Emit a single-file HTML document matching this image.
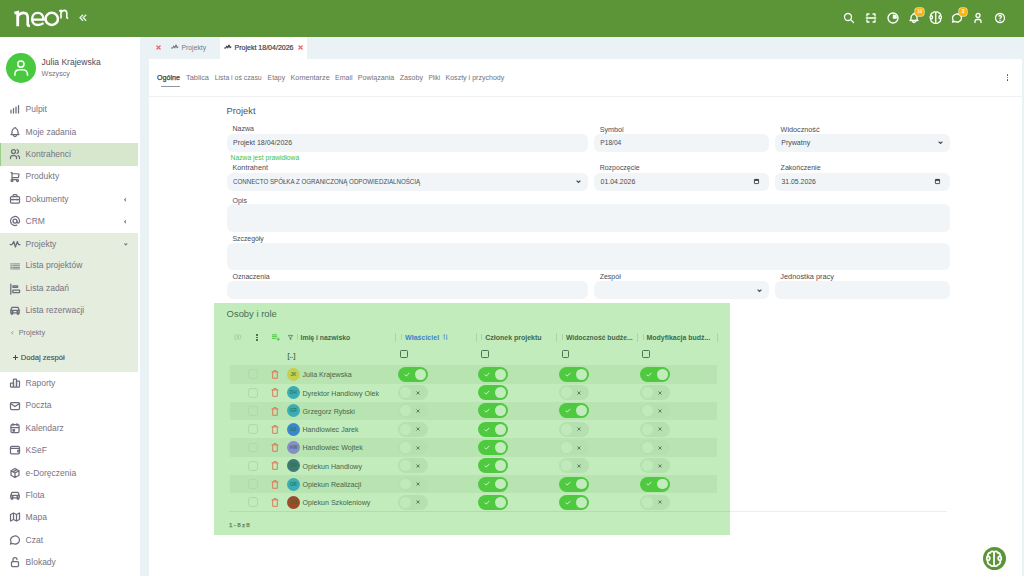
<!DOCTYPE html><html><head><meta charset="utf-8"><style>
*{margin:0;padding:0;box-sizing:border-box}
html,body{width:1024px;height:576px;overflow:hidden;background:#ebf2f6;font-family:"Liberation Sans",sans-serif}
.t{position:absolute;white-space:nowrap}
.r{position:absolute}
svg{position:absolute;overflow:visible}
</style></head><body>
<div class="r" style="left:0.0px;top:0.0px;width:1024.0px;height:37.0px;background:#5b9538;"></div>
<svg style="left:0;top:0" width="80" height="37" viewBox="0 0 80 37"><g fill="none" stroke="#fff" stroke-linecap="butt"><path d="M14.4 13.2 L17.7 12.3 V26.2" stroke-width="2.8"/><path d="M17.7 16.8 C19 14 21.2 12.9 23.6 12.9 C26.5 12.9 27.7 14.8 27.7 17.6 V24.9 Q27.9 25.9 29.9 25.9" stroke-width="2.6"/><path d="M32.1 19.6 H43.5 C43.5 15.4 41 12.9 37.7 12.9 C34.3 12.9 32.1 15.7 32.1 19.2 C32.1 22.8 34.5 25 37.9 25 C40.2 25 41.9 24.3 43.5 23.1" stroke-width="2.4"/><ellipse cx="51.75" cy="18.9" rx="6.2" ry="6.05" stroke-width="2.5"/><path d="M59.2 10.9 L61 10.5 V18.6 M61 12.9 C61.8 11.1 62.9 10.4 64.2 10.4 C65.9 10.4 66.8 11.5 66.8 13.3 V17.6 Q67 18.4 68.2 18.4" stroke-width="1.6"/></g></svg>
<svg style="left:79px;top:14px" width="8" height="8" viewBox="0 0 8 8"><path d="M4 0.8 L1 3.8 L4 6.8 M7.2 0.8 L4.2 3.8 L7.2 6.8" fill="none" stroke="#e8f3f0" stroke-width="1.3"/></svg>
<svg style="left:843.0px;top:11.6px" width="12" height="12" viewBox="0 0 24 24"><g fill="none" stroke="#fff" stroke-width="2.60" stroke-linecap="round" stroke-linejoin="round"><circle cx="10" cy="10" r="7"/><path d="M21 21l-6-6"/></g></svg>
<svg style="left:865.3px;top:11.6px" width="12" height="12" viewBox="0 0 24 24"><g fill="none" stroke="#fff" stroke-width="2.70" stroke-linecap="round" stroke-linejoin="round"><path d="M4 8V4h4M4 16v4h4M16 4h4v4M16 20h4v-4M2.5 12h19"/></g></svg>
<svg style="left:886.5px;top:11.6px" width="12" height="12" viewBox="0 0 24 24"><g fill="none" stroke="#fff" stroke-width="2.70" stroke-linecap="round" stroke-linejoin="round"><circle cx="12" cy="12" r="10"/><path d="M13 6.5v5.5h5.5A5.5 5.5 0 0 0 13 6.5Z" fill="#fff"/></g></svg>
<svg style="left:907.8px;top:11.9px" width="12" height="12" viewBox="0 0 24 24"><g fill="none" stroke="#fff" stroke-width="2.60" stroke-linecap="round" stroke-linejoin="round"><path d="M10 5a2 2 0 0 1 4 0a7 7 0 0 1 4 6v3a4 4 0 0 0 2 3H4a4 4 0 0 0 2-3v-3a7 7 0 0 1 4-6"/><path d="M9 17v1a3 3 0 0 0 6 0v-1"/></g></svg>
<svg style="left:927.8px;top:10.1px" width="15.5" height="15.5" viewBox="0 0 24 24"><g fill="none" stroke="#fff" stroke-width="2.01" stroke-linecap="round" stroke-linejoin="round"><path d="M12 3.5C10.5 2.5 8.3 2.8 7.5 4.5C5.6 4.3 4.1 6.3 4.5 8.5C2.8 9.8 2.8 12.8 4.5 14C3.9 16.3 5.2 18.6 7.5 19C8.5 20.8 10.8 21 12 20C13.2 21 15.5 20.8 16.5 19C18.8 18.6 20.1 16.3 19.5 14C21.2 12.8 21.2 9.8 19.5 8.5C19.9 6.3 18.4 4.3 16.5 4.5C15.7 2.8 13.5 2.5 12 3.5Z"/><path d="M12 3.5V20M4.5 8.5C6 8.8 7 10 7 11.2M4.5 14C6 13.7 7 12.6 7 11.5M19.5 8.5C18 8.8 17 10 17 11.2M19.5 14C18 13.7 17 12.6 17 11.5"/></g></svg>
<svg style="left:950.5px;top:11.6px" width="12" height="12" viewBox="0 0 24 24"><g fill="none" stroke="#fff" stroke-width="2.60" stroke-linecap="round" stroke-linejoin="round"><path d="M3 20l1.3-3.9A9 8 0 1 1 7.7 19L3 20"/></g></svg>
<svg style="left:972.3px;top:11.6px" width="12" height="12" viewBox="0 0 24 24"><g fill="none" stroke="#fff" stroke-width="2.60" stroke-linecap="round" stroke-linejoin="round"><circle cx="12" cy="7" r="4"/><path d="M6 21v-2a4 4 0 0 1 4-4h4a4 4 0 0 1 4 4v2"/></g></svg>
<svg style="left:993.5px;top:11.6px" width="12" height="12" viewBox="0 0 24 24"><g fill="none" stroke="#fff" stroke-width="2.60" stroke-linecap="round" stroke-linejoin="round"><circle cx="12" cy="12" r="9"/><path d="M12 17v.01"/><path d="M12 13.5a1.5 1.5 0 0 1 1-1.5a2.6 2.6 0 1 0-3-4"/></g></svg>
<div class="t" style="left:915.3px;top:8px;width:9px;height:8px;border-radius:3px;background:#fbb414;box-shadow:0 0 0 0.7px rgba(255,236,170,0.85);color:#ffe9e0;font-size:4.6px;line-height:8px;text-align:center;font-weight:bold">10</div>
<div class="t" style="left:959px;top:8px;width:8px;height:8px;border-radius:3px;background:#fbb414;box-shadow:0 0 0 0.7px rgba(255,236,170,0.85);color:#fff;font-size:4.6px;line-height:8px;text-align:center;font-weight:bold">3</div>
<div class="r" style="left:0.0px;top:37.0px;width:140.0px;height:539.0px;background:#fff;"></div>
<div class="r" style="left:6px;top:53px;width:30px;height:30px;border-radius:50%;background:#49c940"></div>
<svg style="left:0;top:40px" width="40" height="50" viewBox="0 40 40 50"><g fill="none" stroke="#fff" stroke-width="1.55"><circle cx="20.9" cy="64.1" r="3.1"/><path d="M14.9 75.7V74.3C14.9 71.6 16.9 69.8 19.6 69.8H22.6C25.3 69.8 27.5 71.6 27.5 74.3V75.7"/></g></svg>
<div class="t" style="left:41.6px;top:56.2px;font-size:8.5px;line-height:12px;color:#4d4b5a;font-weight:normal;">Julia Krajewska</div>
<div class="t" style="left:41.6px;top:67.8px;font-size:7.2px;line-height:12px;color:#777383;font-weight:normal;">Wszyscy</div>
<div class="r" style="left:0.0px;top:143.3px;width:137.6px;height:22.4px;background:#d6e7cd;border-left:1px solid #9ccc8a"></div>
<div class="r" style="left:0.0px;top:233.3px;width:137.7px;height:138.6px;background:#e5eddf;"></div>
<svg style="left:8.5px;top:103.4px" width="12" height="12" viewBox="0 0 24 24"><g fill="none" stroke="#6e6b7b" stroke-width="2.50" stroke-linecap="round" stroke-linejoin="round"><path d="M4 20V14M9 20V11M14 20V8M19 20V5"/></g></svg>
<div class="t" style="left:25.6px;top:103.2px;font-size:8.5px;line-height:12px;color:#777383;font-weight:normal;">Pulpit</div>
<svg style="left:8.5px;top:126.1px" width="12" height="12" viewBox="0 0 24 24"><g fill="none" stroke="#6e6b7b" stroke-width="2.50" stroke-linecap="round" stroke-linejoin="round"><path d="M10 5a2 2 0 0 1 4 0a7 7 0 0 1 4 6v3a4 4 0 0 0 2 3H4a4 4 0 0 0 2-3v-3a7 7 0 0 1 4-6"/><path d="M9 17v1a3 3 0 0 0 6 0v-1"/></g></svg>
<div class="t" style="left:25.6px;top:125.9px;font-size:8.5px;line-height:12px;color:#777383;font-weight:normal;">Moje zadania</div>
<svg style="left:8.5px;top:148.1px" width="12" height="12" viewBox="0 0 24 24"><g fill="none" stroke="#6e6b7b" stroke-width="2.50" stroke-linecap="round" stroke-linejoin="round"><circle cx="9" cy="7" r="4"/><path d="M3 21v-2a4 4 0 0 1 4-4h4a4 4 0 0 1 4 4v2M16 3.13a4 4 0 0 1 0 7.75M21 21v-2a4 4 0 0 0-3-3.85"/></g></svg>
<div class="t" style="left:25.6px;top:147.9px;font-size:8.5px;line-height:12px;color:#777383;font-weight:normal;">Kontrahenci</div>
<svg style="left:8.5px;top:170.6px" width="12" height="12" viewBox="0 0 24 24"><g fill="none" stroke="#6e6b7b" stroke-width="2.50" stroke-linecap="round" stroke-linejoin="round"><circle cx="6" cy="19" r="2"/><circle cx="17" cy="19" r="2"/><path d="M17 17H6V3H4M6 5l14 1-1 7H6"/></g></svg>
<div class="t" style="left:25.6px;top:170.4px;font-size:8.5px;line-height:12px;color:#777383;font-weight:normal;">Produkty</div>
<svg style="left:8.5px;top:192.9px" width="12" height="12" viewBox="0 0 24 24"><g fill="none" stroke="#6e6b7b" stroke-width="2.50" stroke-linecap="round" stroke-linejoin="round"><rect x="3" y="7" width="18" height="13" rx="2"/><path d="M8 7V5a2 2 0 0 1 2-2h4a2 2 0 0 1 2 2v2M3 13h18M8 12v2M16 12v2"/></g></svg>
<div class="t" style="left:25.6px;top:192.7px;font-size:8.5px;line-height:12px;color:#777383;font-weight:normal;">Dokumenty</div>
<svg style="left:8.5px;top:215.1px" width="12" height="12" viewBox="0 0 24 24"><g fill="none" stroke="#6e6b7b" stroke-width="2.50" stroke-linecap="round" stroke-linejoin="round"><circle cx="12" cy="12" r="4"/><path d="M16 12v1.5a2.5 2.5 0 0 0 5 0V12a9 9 0 1 0-5.5 8.28"/></g></svg>
<div class="t" style="left:25.6px;top:214.9px;font-size:8.5px;line-height:12px;color:#777383;font-weight:normal;">CRM</div>
<svg style="left:8.5px;top:238.0px" width="12" height="12" viewBox="0 0 24 24"><g fill="none" stroke="#6e6b7b" stroke-width="2.50" stroke-linecap="round" stroke-linejoin="round"><path d="M2.2 13H6L9.6 7L12.8 18L16.8 7L19 13H22"/></g></svg>
<div class="t" style="left:25.6px;top:237.8px;font-size:8.5px;line-height:12px;color:#777383;font-weight:normal;">Projekty</div>
<svg style="left:8.5px;top:259.6px" width="12" height="12" viewBox="0 0 24 24"><g fill="none" stroke="#6e6b7b" stroke-width="2.50" stroke-linecap="round" stroke-linejoin="round"><path stroke-width="1.6" d="M8 7.8H21M8 11.4H21M8 14.8H21M8 17.8H21M3.4 7.8H6M3.4 11.4H6M3.4 14.8H6M3.4 17.8H6"/></g></svg>
<div class="t" style="left:25.6px;top:259.4px;font-size:8.5px;line-height:12px;color:#777383;font-weight:normal;">Lista projektów</div>
<svg style="left:8.5px;top:282.6px" width="12" height="12" viewBox="0 0 24 24"><g fill="none" stroke="#6e6b7b" stroke-width="2.50" stroke-linecap="round" stroke-linejoin="round"><path d="M3.6 2.2V22.4"/><rect x="7.65" y="5.65" width="9.7" height="2.9" rx="0.8"/><rect x="7.65" y="14.25" width="13.5" height="5.1" rx="0.8"/></g></svg>
<div class="t" style="left:25.6px;top:282.4px;font-size:8.5px;line-height:12px;color:#777383;font-weight:normal;">Lista zadań</div>
<svg style="left:8.5px;top:304.3px" width="12" height="12" viewBox="0 0 24 24"><g fill="none" stroke="#6e6b7b" stroke-width="2.50" stroke-linecap="round" stroke-linejoin="round"><path d="M3.5 17.5V12.5L6 6.5H18L20.5 12.5V17.5ZM3.5 12.5H20.5M6.5 15h1.5M16 15h1.5M4.5 17.5V20H7.5V17.5M16.5 17.5V20H19.5V17.5"/></g></svg>
<div class="t" style="left:25.6px;top:304.1px;font-size:8.5px;line-height:12px;color:#777383;font-weight:normal;">Lista rezerwacji</div>
<svg style="left:8.5px;top:377.0px" width="12" height="12" viewBox="0 0 24 24"><g fill="none" stroke="#6e6b7b" stroke-width="2.50" stroke-linecap="round" stroke-linejoin="round"><rect x="3" y="12" width="6" height="8" rx="1"/><rect x="9" y="4" width="6" height="16" rx="1"/><rect x="15" y="8" width="6" height="12" rx="1"/></g></svg>
<div class="t" style="left:25.6px;top:376.8px;font-size:8.5px;line-height:12px;color:#777383;font-weight:normal;">Raporty</div>
<svg style="left:8.5px;top:399.6px" width="12" height="12" viewBox="0 0 24 24"><g fill="none" stroke="#6e6b7b" stroke-width="2.50" stroke-linecap="round" stroke-linejoin="round"><rect x="3" y="5" width="18" height="14" rx="2"/><path d="M3 7l9 6 9-6"/></g></svg>
<div class="t" style="left:25.6px;top:399.4px;font-size:8.5px;line-height:12px;color:#777383;font-weight:normal;">Poczta</div>
<svg style="left:8.5px;top:421.7px" width="12" height="12" viewBox="0 0 24 24"><g fill="none" stroke="#6e6b7b" stroke-width="2.50" stroke-linecap="round" stroke-linejoin="round"><rect x="4" y="5" width="16" height="16" rx="2"/><path d="M16 3v4M8 3v4M4 11h16"/><rect x="8" y="15" width="3" height="3" fill="#6e6b7b"/></g></svg>
<div class="t" style="left:25.6px;top:421.5px;font-size:8.5px;line-height:12px;color:#777383;font-weight:normal;">Kalendarz</div>
<svg style="left:8.5px;top:444.3px" width="12" height="12" viewBox="0 0 24 24"><g fill="none" stroke="#6e6b7b" stroke-width="2.50" stroke-linecap="round" stroke-linejoin="round"><rect x="3" y="4.5" width="18" height="15" rx="2.5"/><path d="M3 8.5H18.5A2.5 2.5 0 0 1 21 11M21 12.5H17.5V15.5H21"/></g></svg>
<div class="t" style="left:25.6px;top:444.1px;font-size:8.5px;line-height:12px;color:#777383;font-weight:normal;">KSeF</div>
<svg style="left:8.5px;top:466.8px" width="12" height="12" viewBox="0 0 24 24"><g fill="none" stroke="#6e6b7b" stroke-width="2.50" stroke-linecap="round" stroke-linejoin="round"><path d="M12 3l8 4.5v9L12 21l-8-4.5v-9L12 3M12 12l8-4.5M12 12v9M12 12L4 7.5M16 5.25l-8 4.5"/></g></svg>
<div class="t" style="left:25.6px;top:466.6px;font-size:8.5px;line-height:12px;color:#777383;font-weight:normal;">e-Doręczenia</div>
<svg style="left:8.5px;top:489.0px" width="12" height="12" viewBox="0 0 24 24"><g fill="none" stroke="#6e6b7b" stroke-width="2.50" stroke-linecap="round" stroke-linejoin="round"><path d="M3.5 17.5V12.5L6 6.5H18L20.5 12.5V17.5ZM3.5 12.5H20.5M6.5 15h1.5M16 15h1.5M4.5 17.5V20H7.5V17.5M16.5 17.5V20H19.5V17.5"/></g></svg>
<div class="t" style="left:25.6px;top:488.8px;font-size:8.5px;line-height:12px;color:#777383;font-weight:normal;">Flota</div>
<svg style="left:8.5px;top:511.2px" width="12" height="12" viewBox="0 0 24 24"><g fill="none" stroke="#6e6b7b" stroke-width="2.50" stroke-linecap="round" stroke-linejoin="round"><path d="M3 7l6-3 6 3 6-3v13l-6 3-6-3-6 3V7M9 4v13M15 7v13"/></g></svg>
<div class="t" style="left:25.6px;top:511.0px;font-size:8.5px;line-height:12px;color:#777383;font-weight:normal;">Mapa</div>
<svg style="left:8.5px;top:533.7px" width="12" height="12" viewBox="0 0 24 24"><g fill="none" stroke="#6e6b7b" stroke-width="2.50" stroke-linecap="round" stroke-linejoin="round"><path d="M3 20l1.3-3.9A9 8 0 1 1 7.7 19L3 20"/></g></svg>
<div class="t" style="left:25.6px;top:533.5px;font-size:8.5px;line-height:12px;color:#777383;font-weight:normal;">Czat</div>
<svg style="left:8.5px;top:555.8px" width="12" height="12" viewBox="0 0 24 24"><g fill="none" stroke="#6e6b7b" stroke-width="2.50" stroke-linecap="round" stroke-linejoin="round"><rect x="5" y="11" width="14" height="10" rx="2"/><path d="M8 11V7a4 4 0 0 1 8 0"/></g></svg>
<div class="t" style="left:25.6px;top:555.6px;font-size:8.5px;line-height:12px;color:#777383;font-weight:normal;">Blokady</div>
<svg style="left:124.3px;top:198.0px" width="2.4" height="3.6" viewBox="0 0 3 5"><path d="M2.5 0.5L0.7 2.5L2.5 4.5" fill="none" stroke="#74718a" stroke-width="1.4"/></svg>
<svg style="left:124.3px;top:220.2px" width="2.4" height="3.6" viewBox="0 0 3 5"><path d="M2.5 0.5L0.7 2.5L2.5 4.5" fill="none" stroke="#74718a" stroke-width="1.4"/></svg>
<svg style="left:123.7px;top:243px" width="3.6" height="2.4" viewBox="0 0 5 3"><path d="M0.5 0.5L2.5 2.5L4.5 0.5" fill="none" stroke="#74718a" stroke-width="1.4"/></svg>
<svg style="left:11.2px;top:331px" width="2.4" height="3.6" viewBox="0 0 3 5"><path d="M2.5 0.5L0.7 2.5L2.5 4.5" fill="none" stroke="#7a7787" stroke-width="1.1"/></svg>
<div class="t" style="left:18.7px;top:326.8px;font-size:7.3px;line-height:12px;color:#777383;font-weight:normal;">Projekty</div>
<svg style="left:12.6px;top:355.3px" width="5" height="5" viewBox="0 0 5 5"><path d="M2.5 0V5M0 2.5H5" fill="none" stroke="#4b4656" stroke-width="1"/></svg>
<div class="t" style="left:20.8px;top:351.7px;font-size:7.6px;line-height:12px;color:#4a4b58;font-weight:normal;-webkit-text-stroke:0.12px #4a4b58">Dodaj zespół</div>
<div class="r" style="left:219.9px;top:37.0px;width:87.4px;height:22.0px;background:#fff;"></div>
<svg style="left:155.7px;top:45.3px" width="5" height="5" viewBox="0 0 5 5"><path d="M0.5 0.5L4.5 4.5M4.5 0.5L0.5 4.5" stroke="#f3646f" stroke-width="1.3"/></svg>
<svg style="left:170.5px;top:43.4px" width="8" height="8" viewBox="0 0 24 24"><g fill="none" stroke="#70737f" stroke-width="3.30" stroke-linecap="round" stroke-linejoin="round"><path d="M1.5 15H5L8.5 9.5L11.5 14.5L15 6L18.5 14L20.5 12"/></g></svg>
<div class="t" style="left:181.6px;top:42.0px;font-size:6.78px;line-height:12px;color:#737784;font-weight:normal;">Projekty</div>
<svg style="left:223.5px;top:43.4px" width="8" height="8" viewBox="0 0 24 24"><g fill="none" stroke="#3f4450" stroke-width="3.60" stroke-linecap="round" stroke-linejoin="round"><path d="M1.5 15H5L8.5 9.5L11.5 14.5L15 6L18.5 14L20.5 12"/></g></svg>
<div class="t" style="left:234.5px;top:42.0px;font-size:7.04px;line-height:12px;color:#3f4450;font-weight:normal;-webkit-text-stroke:0.2px #3f4450">Projekt 18/04/2026</div>
<svg style="left:298.3px;top:45.2px" width="5" height="5" viewBox="0 0 5 5"><path d="M0.5 0.5L4.5 4.5M4.5 0.5L0.5 4.5" stroke="#f3646f" stroke-width="1.3"/></svg>
<div class="r" style="left:149.0px;top:58.5px;width:873.3px;height:517.5px;background:#fff;"></div>
<div class="r" style="left:149.0px;top:95.7px;width:873.3px;height:1.0px;background:#eef0f3;"></div>
<div class="t" style="left:157.0px;top:72.1px;font-size:7.13px;line-height:12px;color:#3c414d;font-weight:normal;-webkit-text-stroke:0.25px #3c414d">Ogólne</div>
<div class="t" style="left:186.0px;top:72.1px;font-size:7.39px;line-height:12px;color:#6f7380;font-weight:normal;">Tablica</div>
<div class="t" style="left:214.7px;top:72.1px;font-size:6.89px;line-height:12px;color:#6f7380;font-weight:normal;">Lista i oś czasu</div>
<div class="t" style="left:267.6px;top:72.1px;font-size:6.84px;line-height:12px;color:#6f7380;font-weight:normal;">Etapy</div>
<div class="t" style="left:290.5px;top:72.1px;font-size:7.28px;line-height:12px;color:#6f7380;font-weight:normal;">Komentarze</div>
<div class="t" style="left:335.0px;top:72.1px;font-size:7.0px;line-height:12px;color:#6f7380;font-weight:normal;">Email</div>
<div class="t" style="left:357.8px;top:72.1px;font-size:7.14px;line-height:12px;color:#6f7380;font-weight:normal;">Powiązania</div>
<div class="t" style="left:399.8px;top:72.1px;font-size:7.09px;line-height:12px;color:#6f7380;font-weight:normal;">Zasoby</div>
<div class="t" style="left:428.5px;top:72.1px;font-size:6.41px;line-height:12px;color:#6f7380;font-weight:normal;">Pliki</div>
<div class="t" style="left:445.5px;top:72.1px;font-size:7.05px;line-height:12px;color:#6f7380;font-weight:normal;">Koszty i przychody</div>
<div class="r" style="left:160.5px;top:86.1px;width:19.5px;height:1.0px;background:#8e94a0;border-radius:1px"></div>
<div class="r" style="left:1006.8px;top:74.2px;width:1.7px;height:1.7px;background:#474b58;border-radius:50%"></div>
<div class="r" style="left:1006.8px;top:76.6px;width:1.7px;height:1.7px;background:#474b58;border-radius:50%"></div>
<div class="r" style="left:1006.8px;top:79.0px;width:1.7px;height:1.7px;background:#474b58;border-radius:50%"></div>
<div class="t" style="left:226.5px;top:104.6px;font-size:9.32px;line-height:12px;color:#4e5361;font-weight:normal;">Projekt</div>
<div class="r" style="left:226.8px;top:133.9px;width:361.4px;height:17.8px;background:#f2f5f7;border-radius:6px"></div>
<div class="r" style="left:593.6px;top:133.9px;width:175.9px;height:17.8px;background:#f2f5f7;border-radius:6px"></div>
<div class="r" style="left:774.8px;top:133.9px;width:175.2px;height:17.8px;background:#f2f5f7;border-radius:6px"></div>
<div class="r" style="left:226.8px;top:172.5px;width:361.4px;height:18.0px;background:#f2f5f7;border-radius:6px"></div>
<div class="r" style="left:593.6px;top:172.5px;width:175.9px;height:18.0px;background:#f2f5f7;border-radius:6px"></div>
<div class="r" style="left:774.8px;top:172.5px;width:175.2px;height:18.0px;background:#f2f5f7;border-radius:6px"></div>
<div class="r" style="left:226.8px;top:204.2px;width:723.2px;height:27.5px;background:#f2f5f7;border-radius:6px"></div>
<div class="r" style="left:226.8px;top:243.1px;width:723.2px;height:26.7px;background:#f2f5f7;border-radius:6px"></div>
<div class="r" style="left:226.8px;top:281.0px;width:361.4px;height:17.8px;background:#f2f5f7;border-radius:6px"></div>
<div class="r" style="left:593.6px;top:281.0px;width:175.9px;height:17.8px;background:#f2f5f7;border-radius:6px"></div>
<div class="r" style="left:774.8px;top:281.0px;width:175.2px;height:17.8px;background:#f2f5f7;border-radius:6px"></div>
<div class="t" style="left:232.5px;top:123.4px;font-size:7.03px;line-height:12px;color:#474c58;font-weight:normal;">Nazwa</div>
<div class="t" style="left:599.7px;top:123.7px;font-size:7.2px;line-height:12px;color:#474c58;font-weight:normal;">Symbol</div>
<div class="t" style="left:780.6px;top:123.7px;font-size:7.23px;line-height:12px;color:#474c58;font-weight:normal;">Widoczność</div>
<div class="t" style="left:233.1px;top:137.4px;font-size:7.04px;line-height:12px;color:#474c58;font-weight:normal;">Projekt 18/04/2026</div>
<div class="t" style="left:600.3px;top:137.4px;font-size:6.63px;line-height:12px;color:#474c58;font-weight:normal;">P18/04</div>
<div class="t" style="left:781.2px;top:137.4px;font-size:7.05px;line-height:12px;color:#474c58;font-weight:normal;">Prywatny</div>
<div class="t" style="left:230.6px;top:152.2px;font-size:6.76px;line-height:12px;color:#42bf44;font-weight:normal;">Nazwa jest prawidłowa</div>
<div class="t" style="left:232.5px;top:162.2px;font-size:7.26px;line-height:12px;color:#474c58;font-weight:normal;">Kontrahent</div>
<div class="t" style="left:599.7px;top:162.2px;font-size:6.99px;line-height:12px;color:#474c58;font-weight:normal;">Rozpoczęcie</div>
<div class="t" style="left:780.6px;top:162.2px;font-size:7.06px;line-height:12px;color:#474c58;font-weight:normal;">Zakończenie</div>
<div class="t" style="left:233.1px;top:176.2px;font-size:7.9px;line-height:12px;color:#474c58;font-weight:normal;transform:scaleX(0.782);transform-origin:0 50%">CONNECTO SPÓŁKA Z OGRANICZONĄ ODPOWIEDZIALNOŚCIĄ</div>
<div class="t" style="left:600.6px;top:176.4px;font-size:6.93px;line-height:12px;color:#474c58;font-weight:normal;">01.04.2026</div>
<div class="t" style="left:781.5px;top:176.4px;font-size:6.87px;line-height:12px;color:#474c58;font-weight:normal;">31.05.2026</div>
<div class="t" style="left:232.5px;top:194.8px;font-size:7.0px;line-height:12px;color:#474c58;font-weight:normal;">Opis</div>
<div class="t" style="left:232.5px;top:233.3px;font-size:6.86px;line-height:12px;color:#474c58;font-weight:normal;">Szczegóły</div>
<div class="t" style="left:232.5px;top:270.9px;font-size:7.04px;line-height:12px;color:#474c58;font-weight:normal;">Oznaczenia</div>
<div class="t" style="left:599.7px;top:270.9px;font-size:7.0px;line-height:12px;color:#474c58;font-weight:normal;">Zespół</div>
<div class="t" style="left:780.3px;top:270.9px;font-size:7.39px;line-height:12px;color:#474c58;font-weight:normal;">Jednostka pracy</div>
<svg style="left:937.9px;top:141.3px" width="5" height="3" viewBox="0 0 5 3"><path d="M0.6 0.6L2.5 2.4L4.4 0.6" fill="none" stroke="#474c58" stroke-width="1.25"/></svg>
<svg style="left:576.4px;top:180.2px" width="5" height="3" viewBox="0 0 5 3"><path d="M0.6 0.6L2.5 2.4L4.4 0.6" fill="none" stroke="#474c58" stroke-width="1.25"/></svg>
<svg style="left:757.1px;top:288.5px" width="5" height="3" viewBox="0 0 5 3"><path d="M0.6 0.6L2.5 2.4L4.4 0.6" fill="none" stroke="#474c58" stroke-width="1.25"/></svg>
<svg style="left:754.3px;top:179.1px" width="5" height="5" viewBox="0 0 5 5"><rect x="0.4" y="0.4" width="4.2" height="4.2" rx="0.4" fill="none" stroke="#2d2a33" stroke-width="0.8"/><rect x="0.4" y="0.4" width="4.2" height="1.4" fill="#2d2a33"/></svg>
<svg style="left:934.7px;top:179.1px" width="5" height="5" viewBox="0 0 5 5"><rect x="0.4" y="0.4" width="4.2" height="4.2" rx="0.4" fill="none" stroke="#2d2a33" stroke-width="0.8"/><rect x="0.4" y="0.4" width="4.2" height="1.4" fill="#2d2a33"/></svg>
<div class="r" style="left:213.9px;top:303.0px;width:516.2px;height:231.8px;background:#c2ecbc;"></div>
<div class="t" style="left:226.6px;top:307.5px;font-size:9.43px;line-height:12px;color:#4a7059;font-weight:normal;">Osoby i role</div>
<div class="r" style="left:229.6px;top:365.3px;width:487.9px;height:18.3px;background:#b8e4b2;"></div>
<div class="r" style="left:229.6px;top:401.8px;width:487.9px;height:18.3px;background:#b8e4b2;"></div>
<div class="r" style="left:229.6px;top:438.3px;width:487.9px;height:18.3px;background:#b8e4b2;"></div>
<div class="r" style="left:229.6px;top:474.9px;width:487.9px;height:18.3px;background:#b8e4b2;"></div>
<div class="r" style="left:229.0px;top:510.6px;width:718.0px;height:1.0px;background:#eeeeee;"></div>
<div class="r" style="left:229.0px;top:510.6px;width:501.1px;height:1.0px;background:#b3dcad;"></div>
<div class="r" style="left:395.2px;top:332.5px;width:0.8px;height:9.6px;background:#add5a7;"></div>
<div class="r" style="left:475.8px;top:332.5px;width:0.8px;height:9.6px;background:#add5a7;"></div>
<div class="r" style="left:556.4px;top:332.5px;width:0.8px;height:9.6px;background:#add5a7;"></div>
<div class="r" style="left:637.0px;top:332.5px;width:0.8px;height:9.6px;background:#add5a7;"></div>
<div class="r" style="left:717.4px;top:332.5px;width:0.8px;height:9.6px;background:#add5a7;"></div>
<div class="t" style="left:300.5px;top:332.2px;font-size:6.84px;line-height:12px;color:#3d6a4e;font-weight:bold;">Imię i nazwisko</div>
<div class="t" style="left:405.0px;top:332.2px;font-size:7.07px;line-height:12px;color:#3a84cc;font-weight:bold;">Właściciel</div>
<div class="t" style="left:485.3px;top:332.2px;font-size:6.99px;line-height:12px;color:#3d6a4e;font-weight:bold;">Członek projektu</div>
<div class="t" style="left:565.9px;top:332.2px;font-size:6.81px;line-height:12px;color:#3d6a4e;font-weight:bold;">Widoczność budże...</div>
<div class="t" style="left:646.6px;top:332.2px;font-size:6.95px;line-height:12px;color:#3d6a4e;font-weight:bold;">Modyfikacja budż...</div>
<svg style="left:296.7px;top:334.3px" width="1" height="6" viewBox="0 0 1 6"><path d="M0.5 0.5V1.5M0.5 2.5V3.5M0.5 4.5V5.5" stroke="#8fb884" stroke-width="0.9"/></svg>
<svg style="left:401.0px;top:334.3px" width="1" height="6" viewBox="0 0 1 6"><path d="M0.5 0.5V1.5M0.5 2.5V3.5M0.5 4.5V5.5" stroke="#8fb884" stroke-width="0.9"/></svg>
<svg style="left:481.1px;top:334.3px" width="1" height="6" viewBox="0 0 1 6"><path d="M0.5 0.5V1.5M0.5 2.5V3.5M0.5 4.5V5.5" stroke="#8fb884" stroke-width="0.9"/></svg>
<svg style="left:562.0px;top:334.3px" width="1" height="6" viewBox="0 0 1 6"><path d="M0.5 0.5V1.5M0.5 2.5V3.5M0.5 4.5V5.5" stroke="#8fb884" stroke-width="0.9"/></svg>
<svg style="left:642.9px;top:334.3px" width="1" height="6" viewBox="0 0 1 6"><path d="M0.5 0.5V1.5M0.5 2.5V3.5M0.5 4.5V5.5" stroke="#8fb884" stroke-width="0.9"/></svg>
<svg style="left:288px;top:334.7px" width="5" height="5" viewBox="0 0 5 5"><path d="M0.3 0.4H4.7L2.9 2.7V4.6L2.1 4.1V2.7Z" fill="none" stroke="#4a6a4a" stroke-width="0.7" stroke-linejoin="round"/></svg>
<svg style="left:443px;top:334.3px" width="5" height="6" viewBox="0 0 5 6"><path d="M1.3 5.5V0.5L0.3 1.5M3.7 0.5V5.5L4.7 4.5" fill="none" stroke="#3d7fd0" stroke-width="0.7"/></svg>
<svg style="left:234px;top:334.1px" width="8" height="6.4" viewBox="0 0 8 6.4"><path d="M1.8 0.4Q0.9 0.4 0.9 1.3V2.6Q0.9 3.2 0.4 3.2Q0.9 3.2 0.9 3.8V5.1Q0.9 6 1.8 6M3.2 0.4V6" fill="none" stroke="#95c090" stroke-width="0.6"/><ellipse cx="5.6" cy="3.2" rx="1.3" ry="2.2" fill="none" stroke="#95c090" stroke-width="0.6"/></svg>
<div class="r" style="left:256.3px;top:334.1px;width:1.4px;height:1.5px;background:#3f5a40;border-radius:50%"></div>
<div class="r" style="left:256.3px;top:336.6px;width:1.4px;height:1.5px;background:#3f5a40;border-radius:50%"></div>
<div class="r" style="left:256.3px;top:339.1px;width:1.4px;height:1.5px;background:#3f5a40;border-radius:50%"></div>
<svg style="left:272px;top:333.8px" width="8" height="7" viewBox="0 0 8 7"><path d="M0 0.9H5M0 2.7H5M0 4.5H4" stroke="#5ccf52" stroke-width="1.2"/><path d="M6.2 3.6V6.8M4.6 5.2H7.8" stroke="#4cc94a" stroke-width="1.1"/></svg>
<div class="t" style="left:287.4px;top:349.9px;font-size:6.5px;line-height:12px;color:#456f50;font-weight:bold;">[..]</div>
<div class="r" style="left:400.3px;top:350.3px;width:7.7px;height:7.7px;background:transparent;border:1.3px solid #4a7655;border-radius:1.3px"></div>
<div class="r" style="left:480.9px;top:350.3px;width:7.7px;height:7.7px;background:transparent;border:1.3px solid #4a7655;border-radius:1.3px"></div>
<div class="r" style="left:561.5px;top:350.3px;width:7.7px;height:7.7px;background:transparent;border:1.3px solid #4a7655;border-radius:1.3px"></div>
<div class="r" style="left:642.1px;top:350.3px;width:7.7px;height:7.7px;background:transparent;border:1.3px solid #4a7655;border-radius:1.3px"></div>
<div class="r" style="left:248.3px;top:369.4px;width:9.9px;height:9.9px;background:transparent;border:1px solid #b0d8aa;border-radius:3px"></div>
<svg style="left:271px;top:370.0px" width="8" height="9" viewBox="0 0 8 9"><path d="M0.6 1.9H7.4M1.7 1.9V8.3H6.3V1.9M2.7 1.9L2.9 0.6H5.1L5.3 1.9" fill="none" stroke="#dc7554" stroke-width="0.95" stroke-linejoin="round"/></svg>
<div class="r" style="left:286.9px;top:367.9px;width:13px;height:13px;border-radius:50%;background:#c6cf4e;color:rgba(40,110,50,0.75);font-size:4.6px;line-height:13px;text-align:center;font-weight:bold">JK</div>
<div class="t" style="left:302.5px;top:369.2px;font-size:7.1px;line-height:12px;color:#45664c;font-weight:normal;">Julia Krajewska</div>
<div class="r" style="left:397.8px;top:366.9px;width:30px;height:15px;border-radius:7.5px;background:#4ec940"><div class="r" style="left:17.2px;top:2.1px;width:10.8px;height:10.8px;border-radius:50%;background:#c2ecbc"></div></div>
<svg style="left:403.8px;top:371.8px" width="6" height="5" viewBox="0 0 5 4"><path d="M0.5 2.1L1.9 3.3L4.5 0.6" fill="none" stroke="#d6f5d0" stroke-width="0.8"/></svg>
<div class="r" style="left:478.3px;top:366.9px;width:30px;height:15px;border-radius:7.5px;background:#4ec940"><div class="r" style="left:17.2px;top:2.1px;width:10.8px;height:10.8px;border-radius:50%;background:#c2ecbc"></div></div>
<svg style="left:484.3px;top:371.8px" width="6" height="5" viewBox="0 0 5 4"><path d="M0.5 2.1L1.9 3.3L4.5 0.6" fill="none" stroke="#d6f5d0" stroke-width="0.8"/></svg>
<div class="r" style="left:559.0px;top:366.9px;width:30px;height:15px;border-radius:7.5px;background:#4ec940"><div class="r" style="left:17.2px;top:2.1px;width:10.8px;height:10.8px;border-radius:50%;background:#c2ecbc"></div></div>
<svg style="left:565.0px;top:371.8px" width="6" height="5" viewBox="0 0 5 4"><path d="M0.5 2.1L1.9 3.3L4.5 0.6" fill="none" stroke="#d6f5d0" stroke-width="0.8"/></svg>
<div class="r" style="left:640.3px;top:366.9px;width:30px;height:15px;border-radius:7.5px;background:#4ec940"><div class="r" style="left:17.2px;top:2.1px;width:10.8px;height:10.8px;border-radius:50%;background:#c2ecbc"></div></div>
<svg style="left:646.3px;top:371.8px" width="6" height="5" viewBox="0 0 5 4"><path d="M0.5 2.1L1.9 3.3L4.5 0.6" fill="none" stroke="#d6f5d0" stroke-width="0.8"/></svg>
<div class="r" style="left:248.3px;top:387.7px;width:9.9px;height:9.9px;background:transparent;border:1px solid #b0d8aa;border-radius:3px"></div>
<svg style="left:271px;top:388.3px" width="8" height="9" viewBox="0 0 8 9"><path d="M0.6 1.9H7.4M1.7 1.9V8.3H6.3V1.9M2.7 1.9L2.9 0.6H5.1L5.3 1.9" fill="none" stroke="#dc7554" stroke-width="0.95" stroke-linejoin="round"/></svg>
<div class="r" style="left:286.9px;top:386.2px;width:13px;height:13px;border-radius:50%;background:#3aacb8;color:rgba(40,110,50,0.75);font-size:4.6px;line-height:13px;text-align:center;font-weight:bold">DH</div>
<div class="t" style="left:302.5px;top:387.5px;font-size:7.1px;line-height:12px;color:#45664c;font-weight:normal;">Dyrektor Handlowy Olek</div>
<div class="r" style="left:397.8px;top:385.2px;width:30px;height:15px;border-radius:7.5px;background:#b5e0af"><div class="r" style="left:2.1px;top:2.1px;width:10.8px;height:10.8px;border-radius:50%;background:#c0eab9"></div></div>
<svg style="left:415.9px;top:390.7px" width="4" height="4" viewBox="0 0 4 4"><path d="M0.5 0.5L3.5 3.5M3.5 0.5L0.5 3.5" fill="none" stroke="#5b7b5d" stroke-width="0.95"/></svg>
<div class="r" style="left:478.3px;top:385.2px;width:30px;height:15px;border-radius:7.5px;background:#4ec940"><div class="r" style="left:17.2px;top:2.1px;width:10.8px;height:10.8px;border-radius:50%;background:#c2ecbc"></div></div>
<svg style="left:484.3px;top:390.1px" width="6" height="5" viewBox="0 0 5 4"><path d="M0.5 2.1L1.9 3.3L4.5 0.6" fill="none" stroke="#d6f5d0" stroke-width="0.8"/></svg>
<div class="r" style="left:559.0px;top:385.2px;width:30px;height:15px;border-radius:7.5px;background:#b5e0af"><div class="r" style="left:2.1px;top:2.1px;width:10.8px;height:10.8px;border-radius:50%;background:#c0eab9"></div></div>
<svg style="left:577.1px;top:390.7px" width="4" height="4" viewBox="0 0 4 4"><path d="M0.5 0.5L3.5 3.5M3.5 0.5L0.5 3.5" fill="none" stroke="#5b7b5d" stroke-width="0.95"/></svg>
<div class="r" style="left:640.3px;top:385.2px;width:30px;height:15px;border-radius:7.5px;background:#b5e0af"><div class="r" style="left:2.1px;top:2.1px;width:10.8px;height:10.8px;border-radius:50%;background:#c0eab9"></div></div>
<svg style="left:658.4px;top:390.7px" width="4" height="4" viewBox="0 0 4 4"><path d="M0.5 0.5L3.5 3.5M3.5 0.5L0.5 3.5" fill="none" stroke="#5b7b5d" stroke-width="0.95"/></svg>
<div class="r" style="left:248.3px;top:406.0px;width:9.9px;height:9.9px;background:transparent;border:1px solid #b0d8aa;border-radius:3px"></div>
<svg style="left:271px;top:406.5px" width="8" height="9" viewBox="0 0 8 9"><path d="M0.6 1.9H7.4M1.7 1.9V8.3H6.3V1.9M2.7 1.9L2.9 0.6H5.1L5.3 1.9" fill="none" stroke="#dc7554" stroke-width="0.95" stroke-linejoin="round"/></svg>
<div class="r" style="left:286.9px;top:404.4px;width:13px;height:13px;border-radius:50%;background:#3aacb8;color:rgba(40,110,50,0.75);font-size:4.6px;line-height:13px;text-align:center;font-weight:bold">GR</div>
<div class="t" style="left:302.5px;top:405.8px;font-size:7.1px;line-height:12px;color:#45664c;font-weight:normal;">Grzegorz Rybski</div>
<div class="r" style="left:397.8px;top:403.4px;width:30px;height:15px;border-radius:7.5px;background:#b5e0af"><div class="r" style="left:2.1px;top:2.1px;width:10.8px;height:10.8px;border-radius:50%;background:#c0eab9"></div></div>
<svg style="left:415.9px;top:408.9px" width="4" height="4" viewBox="0 0 4 4"><path d="M0.5 0.5L3.5 3.5M3.5 0.5L0.5 3.5" fill="none" stroke="#5b7b5d" stroke-width="0.95"/></svg>
<div class="r" style="left:478.3px;top:403.4px;width:30px;height:15px;border-radius:7.5px;background:#4ec940"><div class="r" style="left:17.2px;top:2.1px;width:10.8px;height:10.8px;border-radius:50%;background:#c2ecbc"></div></div>
<svg style="left:484.3px;top:408.3px" width="6" height="5" viewBox="0 0 5 4"><path d="M0.5 2.1L1.9 3.3L4.5 0.6" fill="none" stroke="#d6f5d0" stroke-width="0.8"/></svg>
<div class="r" style="left:559.0px;top:403.4px;width:30px;height:15px;border-radius:7.5px;background:#4ec940"><div class="r" style="left:17.2px;top:2.1px;width:10.8px;height:10.8px;border-radius:50%;background:#c2ecbc"></div></div>
<svg style="left:565.0px;top:408.3px" width="6" height="5" viewBox="0 0 5 4"><path d="M0.5 2.1L1.9 3.3L4.5 0.6" fill="none" stroke="#d6f5d0" stroke-width="0.8"/></svg>
<div class="r" style="left:640.3px;top:403.4px;width:30px;height:15px;border-radius:7.5px;background:#b5e0af"><div class="r" style="left:2.1px;top:2.1px;width:10.8px;height:10.8px;border-radius:50%;background:#c0eab9"></div></div>
<svg style="left:658.4px;top:408.9px" width="4" height="4" viewBox="0 0 4 4"><path d="M0.5 0.5L3.5 3.5M3.5 0.5L0.5 3.5" fill="none" stroke="#5b7b5d" stroke-width="0.95"/></svg>
<div class="r" style="left:248.3px;top:424.3px;width:9.9px;height:9.9px;background:transparent;border:1px solid #b0d8aa;border-radius:3px"></div>
<svg style="left:271px;top:424.8px" width="8" height="9" viewBox="0 0 8 9"><path d="M0.6 1.9H7.4M1.7 1.9V8.3H6.3V1.9M2.7 1.9L2.9 0.6H5.1L5.3 1.9" fill="none" stroke="#dc7554" stroke-width="0.95" stroke-linejoin="round"/></svg>
<div class="r" style="left:286.9px;top:422.7px;width:13px;height:13px;border-radius:50%;background:#3a88c8;color:rgba(40,110,50,0.75);font-size:4.6px;line-height:13px;text-align:center;font-weight:bold">HJ</div>
<div class="t" style="left:302.5px;top:424.1px;font-size:7.1px;line-height:12px;color:#45664c;font-weight:normal;">Handlowiec Jarek</div>
<div class="r" style="left:397.8px;top:421.7px;width:30px;height:15px;border-radius:7.5px;background:#b5e0af"><div class="r" style="left:2.1px;top:2.1px;width:10.8px;height:10.8px;border-radius:50%;background:#c0eab9"></div></div>
<svg style="left:415.9px;top:427.2px" width="4" height="4" viewBox="0 0 4 4"><path d="M0.5 0.5L3.5 3.5M3.5 0.5L0.5 3.5" fill="none" stroke="#5b7b5d" stroke-width="0.95"/></svg>
<div class="r" style="left:478.3px;top:421.7px;width:30px;height:15px;border-radius:7.5px;background:#4ec940"><div class="r" style="left:17.2px;top:2.1px;width:10.8px;height:10.8px;border-radius:50%;background:#c2ecbc"></div></div>
<svg style="left:484.3px;top:426.6px" width="6" height="5" viewBox="0 0 5 4"><path d="M0.5 2.1L1.9 3.3L4.5 0.6" fill="none" stroke="#d6f5d0" stroke-width="0.8"/></svg>
<div class="r" style="left:559.0px;top:421.7px;width:30px;height:15px;border-radius:7.5px;background:#b5e0af"><div class="r" style="left:2.1px;top:2.1px;width:10.8px;height:10.8px;border-radius:50%;background:#c0eab9"></div></div>
<svg style="left:577.1px;top:427.2px" width="4" height="4" viewBox="0 0 4 4"><path d="M0.5 0.5L3.5 3.5M3.5 0.5L0.5 3.5" fill="none" stroke="#5b7b5d" stroke-width="0.95"/></svg>
<div class="r" style="left:640.3px;top:421.7px;width:30px;height:15px;border-radius:7.5px;background:#b5e0af"><div class="r" style="left:2.1px;top:2.1px;width:10.8px;height:10.8px;border-radius:50%;background:#c0eab9"></div></div>
<svg style="left:658.4px;top:427.2px" width="4" height="4" viewBox="0 0 4 4"><path d="M0.5 0.5L3.5 3.5M3.5 0.5L0.5 3.5" fill="none" stroke="#5b7b5d" stroke-width="0.95"/></svg>
<div class="r" style="left:248.3px;top:442.5px;width:9.9px;height:9.9px;background:transparent;border:1px solid #b0d8aa;border-radius:3px"></div>
<svg style="left:271px;top:443.1px" width="8" height="9" viewBox="0 0 8 9"><path d="M0.6 1.9H7.4M1.7 1.9V8.3H6.3V1.9M2.7 1.9L2.9 0.6H5.1L5.3 1.9" fill="none" stroke="#dc7554" stroke-width="0.95" stroke-linejoin="round"/></svg>
<div class="r" style="left:286.9px;top:441.0px;width:13px;height:13px;border-radius:50%;background:#8b8bc6;color:rgba(40,110,50,0.75);font-size:4.6px;line-height:13px;text-align:center;font-weight:bold">HW</div>
<div class="t" style="left:302.5px;top:442.3px;font-size:7.1px;line-height:12px;color:#45664c;font-weight:normal;">Handlowiec Wojtek</div>
<div class="r" style="left:397.8px;top:440.0px;width:30px;height:15px;border-radius:7.5px;background:#b5e0af"><div class="r" style="left:2.1px;top:2.1px;width:10.8px;height:10.8px;border-radius:50%;background:#c0eab9"></div></div>
<svg style="left:415.9px;top:445.5px" width="4" height="4" viewBox="0 0 4 4"><path d="M0.5 0.5L3.5 3.5M3.5 0.5L0.5 3.5" fill="none" stroke="#5b7b5d" stroke-width="0.95"/></svg>
<div class="r" style="left:478.3px;top:440.0px;width:30px;height:15px;border-radius:7.5px;background:#4ec940"><div class="r" style="left:17.2px;top:2.1px;width:10.8px;height:10.8px;border-radius:50%;background:#c2ecbc"></div></div>
<svg style="left:484.3px;top:444.9px" width="6" height="5" viewBox="0 0 5 4"><path d="M0.5 2.1L1.9 3.3L4.5 0.6" fill="none" stroke="#d6f5d0" stroke-width="0.8"/></svg>
<div class="r" style="left:559.0px;top:440.0px;width:30px;height:15px;border-radius:7.5px;background:#b5e0af"><div class="r" style="left:2.1px;top:2.1px;width:10.8px;height:10.8px;border-radius:50%;background:#c0eab9"></div></div>
<svg style="left:577.1px;top:445.5px" width="4" height="4" viewBox="0 0 4 4"><path d="M0.5 0.5L3.5 3.5M3.5 0.5L0.5 3.5" fill="none" stroke="#5b7b5d" stroke-width="0.95"/></svg>
<div class="r" style="left:640.3px;top:440.0px;width:30px;height:15px;border-radius:7.5px;background:#b5e0af"><div class="r" style="left:2.1px;top:2.1px;width:10.8px;height:10.8px;border-radius:50%;background:#c0eab9"></div></div>
<svg style="left:658.4px;top:445.5px" width="4" height="4" viewBox="0 0 4 4"><path d="M0.5 0.5L3.5 3.5M3.5 0.5L0.5 3.5" fill="none" stroke="#5b7b5d" stroke-width="0.95"/></svg>
<div class="r" style="left:248.3px;top:460.8px;width:9.9px;height:9.9px;background:transparent;border:1px solid #b0d8aa;border-radius:3px"></div>
<svg style="left:271px;top:461.4px" width="8" height="9" viewBox="0 0 8 9"><path d="M0.6 1.9H7.4M1.7 1.9V8.3H6.3V1.9M2.7 1.9L2.9 0.6H5.1L5.3 1.9" fill="none" stroke="#dc7554" stroke-width="0.95" stroke-linejoin="round"/></svg>
<div class="r" style="left:286.9px;top:459.2px;width:13px;height:13px;border-radius:50%;background:#3e7a72;color:rgba(40,110,50,0.75);font-size:4.6px;line-height:13px;text-align:center;font-weight:bold">OH</div>
<div class="t" style="left:302.5px;top:460.6px;font-size:7.1px;line-height:12px;color:#45664c;font-weight:normal;">Opiekun Handlowy</div>
<div class="r" style="left:397.8px;top:458.2px;width:30px;height:15px;border-radius:7.5px;background:#b5e0af"><div class="r" style="left:2.1px;top:2.1px;width:10.8px;height:10.8px;border-radius:50%;background:#c0eab9"></div></div>
<svg style="left:415.9px;top:463.8px" width="4" height="4" viewBox="0 0 4 4"><path d="M0.5 0.5L3.5 3.5M3.5 0.5L0.5 3.5" fill="none" stroke="#5b7b5d" stroke-width="0.95"/></svg>
<div class="r" style="left:478.3px;top:458.2px;width:30px;height:15px;border-radius:7.5px;background:#4ec940"><div class="r" style="left:17.2px;top:2.1px;width:10.8px;height:10.8px;border-radius:50%;background:#c2ecbc"></div></div>
<svg style="left:484.3px;top:463.1px" width="6" height="5" viewBox="0 0 5 4"><path d="M0.5 2.1L1.9 3.3L4.5 0.6" fill="none" stroke="#d6f5d0" stroke-width="0.8"/></svg>
<div class="r" style="left:559.0px;top:458.2px;width:30px;height:15px;border-radius:7.5px;background:#b5e0af"><div class="r" style="left:2.1px;top:2.1px;width:10.8px;height:10.8px;border-radius:50%;background:#c0eab9"></div></div>
<svg style="left:577.1px;top:463.8px" width="4" height="4" viewBox="0 0 4 4"><path d="M0.5 0.5L3.5 3.5M3.5 0.5L0.5 3.5" fill="none" stroke="#5b7b5d" stroke-width="0.95"/></svg>
<div class="r" style="left:640.3px;top:458.2px;width:30px;height:15px;border-radius:7.5px;background:#b5e0af"><div class="r" style="left:2.1px;top:2.1px;width:10.8px;height:10.8px;border-radius:50%;background:#c0eab9"></div></div>
<svg style="left:658.4px;top:463.8px" width="4" height="4" viewBox="0 0 4 4"><path d="M0.5 0.5L3.5 3.5M3.5 0.5L0.5 3.5" fill="none" stroke="#5b7b5d" stroke-width="0.95"/></svg>
<div class="r" style="left:248.3px;top:479.1px;width:9.9px;height:9.9px;background:transparent;border:1px solid #b0d8aa;border-radius:3px"></div>
<svg style="left:271px;top:479.6px" width="8" height="9" viewBox="0 0 8 9"><path d="M0.6 1.9H7.4M1.7 1.9V8.3H6.3V1.9M2.7 1.9L2.9 0.6H5.1L5.3 1.9" fill="none" stroke="#dc7554" stroke-width="0.95" stroke-linejoin="round"/></svg>
<div class="r" style="left:286.9px;top:477.5px;width:13px;height:13px;border-radius:50%;background:#3aacb8;color:rgba(40,110,50,0.75);font-size:4.6px;line-height:13px;text-align:center;font-weight:bold">OR</div>
<div class="t" style="left:302.5px;top:478.9px;font-size:7.1px;line-height:12px;color:#45664c;font-weight:normal;">Opiekun Realizacji</div>
<div class="r" style="left:397.8px;top:476.5px;width:30px;height:15px;border-radius:7.5px;background:#b5e0af"><div class="r" style="left:2.1px;top:2.1px;width:10.8px;height:10.8px;border-radius:50%;background:#c0eab9"></div></div>
<svg style="left:415.9px;top:482.0px" width="4" height="4" viewBox="0 0 4 4"><path d="M0.5 0.5L3.5 3.5M3.5 0.5L0.5 3.5" fill="none" stroke="#5b7b5d" stroke-width="0.95"/></svg>
<div class="r" style="left:478.3px;top:476.5px;width:30px;height:15px;border-radius:7.5px;background:#4ec940"><div class="r" style="left:17.2px;top:2.1px;width:10.8px;height:10.8px;border-radius:50%;background:#c2ecbc"></div></div>
<svg style="left:484.3px;top:481.4px" width="6" height="5" viewBox="0 0 5 4"><path d="M0.5 2.1L1.9 3.3L4.5 0.6" fill="none" stroke="#d6f5d0" stroke-width="0.8"/></svg>
<div class="r" style="left:559.0px;top:476.5px;width:30px;height:15px;border-radius:7.5px;background:#4ec940"><div class="r" style="left:17.2px;top:2.1px;width:10.8px;height:10.8px;border-radius:50%;background:#c2ecbc"></div></div>
<svg style="left:565.0px;top:481.4px" width="6" height="5" viewBox="0 0 5 4"><path d="M0.5 2.1L1.9 3.3L4.5 0.6" fill="none" stroke="#d6f5d0" stroke-width="0.8"/></svg>
<div class="r" style="left:640.3px;top:476.5px;width:30px;height:15px;border-radius:7.5px;background:#4ec940"><div class="r" style="left:17.2px;top:2.1px;width:10.8px;height:10.8px;border-radius:50%;background:#c2ecbc"></div></div>
<svg style="left:646.3px;top:481.4px" width="6" height="5" viewBox="0 0 5 4"><path d="M0.5 2.1L1.9 3.3L4.5 0.6" fill="none" stroke="#d6f5d0" stroke-width="0.8"/></svg>
<div class="r" style="left:248.3px;top:497.3px;width:9.9px;height:9.9px;background:transparent;border:1px solid #b0d8aa;border-radius:3px"></div>
<svg style="left:271px;top:497.9px" width="8" height="9" viewBox="0 0 8 9"><path d="M0.6 1.9H7.4M1.7 1.9V8.3H6.3V1.9M2.7 1.9L2.9 0.6H5.1L5.3 1.9" fill="none" stroke="#dc7554" stroke-width="0.95" stroke-linejoin="round"/></svg>
<div class="r" style="left:286.9px;top:495.8px;width:13px;height:13px;border-radius:50%;background:#9e4a2a;color:rgba(40,110,50,0.75);font-size:4.6px;line-height:13px;text-align:center;font-weight:bold">OS</div>
<div class="t" style="left:302.5px;top:497.1px;font-size:7.1px;line-height:12px;color:#45664c;font-weight:normal;">Opiekun Szkoleniowy</div>
<div class="r" style="left:397.8px;top:494.8px;width:30px;height:15px;border-radius:7.5px;background:#b5e0af"><div class="r" style="left:2.1px;top:2.1px;width:10.8px;height:10.8px;border-radius:50%;background:#c0eab9"></div></div>
<svg style="left:415.9px;top:500.3px" width="4" height="4" viewBox="0 0 4 4"><path d="M0.5 0.5L3.5 3.5M3.5 0.5L0.5 3.5" fill="none" stroke="#5b7b5d" stroke-width="0.95"/></svg>
<div class="r" style="left:478.3px;top:494.8px;width:30px;height:15px;border-radius:7.5px;background:#4ec940"><div class="r" style="left:17.2px;top:2.1px;width:10.8px;height:10.8px;border-radius:50%;background:#c2ecbc"></div></div>
<svg style="left:484.3px;top:499.7px" width="6" height="5" viewBox="0 0 5 4"><path d="M0.5 2.1L1.9 3.3L4.5 0.6" fill="none" stroke="#d6f5d0" stroke-width="0.8"/></svg>
<div class="r" style="left:559.0px;top:494.8px;width:30px;height:15px;border-radius:7.5px;background:#4ec940"><div class="r" style="left:17.2px;top:2.1px;width:10.8px;height:10.8px;border-radius:50%;background:#c2ecbc"></div></div>
<svg style="left:565.0px;top:499.7px" width="6" height="5" viewBox="0 0 5 4"><path d="M0.5 2.1L1.9 3.3L4.5 0.6" fill="none" stroke="#d6f5d0" stroke-width="0.8"/></svg>
<div class="r" style="left:640.3px;top:494.8px;width:30px;height:15px;border-radius:7.5px;background:#b5e0af"><div class="r" style="left:2.1px;top:2.1px;width:10.8px;height:10.8px;border-radius:50%;background:#c0eab9"></div></div>
<svg style="left:658.4px;top:500.3px" width="4" height="4" viewBox="0 0 4 4"><path d="M0.5 0.5L3.5 3.5M3.5 0.5L0.5 3.5" fill="none" stroke="#5b7b5d" stroke-width="0.95"/></svg>
<div class="t" style="left:229.0px;top:518.5px;font-size:6.2px;line-height:12px;color:#5f8460;font-weight:normal;letter-spacing:-0.2px;-webkit-text-stroke:0.25px #5f8460">1 - 8 z 8</div>
<div class="r" style="left:983px;top:547.2px;width:23px;height:23px;border-radius:50%;background:#5b9538"></div>
<svg style="left:984.3px;top:548.6px" width="20" height="20" viewBox="0 0 24 24"><g fill="none" stroke="#fff" stroke-width="2.16" stroke-linecap="round" stroke-linejoin="round"><path d="M12 3.5C10.5 2.5 8.3 2.8 7.5 4.5C5.6 4.3 4.1 6.3 4.5 8.5C2.8 9.8 2.8 12.8 4.5 14C3.9 16.3 5.2 18.6 7.5 19C8.5 20.8 10.8 21 12 20C13.2 21 15.5 20.8 16.5 19C18.8 18.6 20.1 16.3 19.5 14C21.2 12.8 21.2 9.8 19.5 8.5C19.9 6.3 18.4 4.3 16.5 4.5C15.7 2.8 13.5 2.5 12 3.5Z"/><path d="M12 3.5V20M4.5 8.5C6 8.8 7 10 7 11.2M4.5 14C6 13.7 7 12.6 7 11.5M19.5 8.5C18 8.8 17 10 17 11.2M19.5 14C18 13.7 17 12.6 17 11.5"/></g></svg>
</body></html>
